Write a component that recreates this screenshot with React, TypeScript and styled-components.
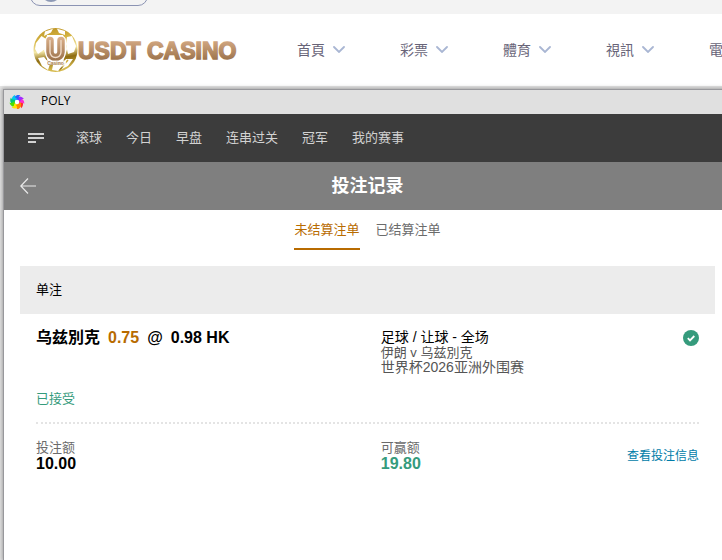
import React from 'react';
import styled, { createGlobalStyle } from 'styled-components';

const GlobalStyle = createGlobalStyle`
  * { box-sizing: border-box; }
  html, body, #root { height: 100%; }
  body {
    margin: 0;
    overflow: hidden;
    background: #e6e6e6;
    font-family: "Liberation Sans", "Noto Sans CJK SC", sans-serif;
    font-size: 13px;
    line-height: 15px;
    color: #000;
  }
  button { font: inherit; border: 0; padding: 0; background: none; cursor: pointer; }
  h1, h2, p, dl, dt, dd { margin: 0; }
`;

const Page = styled.div`
  display: flex;
  flex-direction: column;
  min-height: 100%;
  overflow: hidden;
`;

const TopStrip = styled.div`
  display: flex;
  align-items: flex-end;
  height: 14px;
  padding: 0 30px 8px;
  background: #f3f3f3;
`;

const AccountPill = styled.button`
  display: flex;
  align-items: center;
  flex: none;
  width: 118px;
  height: 28px;
  padding-left: 10px !important;
  border: 1px solid #8b93b3 !important;
  border-radius: 10px;
`;

const Avatar = styled.span`
  width: 20px;
  height: 20px;
  border-radius: 50%;
  background: #8d99b5;
`;

const SiteHeader = styled.header`
  display: flex;
  align-items: center;
  height: 72px;
  padding-left: 33px;
  background: #fff;
`;

const Brand = styled.a`
  display: flex;
  align-items: center;
  flex: none;
  width: 264px;
  text-decoration: none;
`;

const SiteMenu = styled.nav`
  display: flex;
  gap: 55px;
`;

const SiteMenuItem = styled.button`
  display: flex;
  align-items: center;
  gap: 8px;
  flex: none;
  height: 20px;
  margin-bottom: 2px;
  font-family: "Noto Sans CJK TC", sans-serif !important;
  font-size: 14px !important;
  line-height: 20px !important;
  color: #686478;
  white-space: nowrap;
`;

const Window = styled.main`
  flex: 1;
  display: flex;
  flex-direction: column;
  margin: 3px -10px 0 3px;
  border: 1px solid #98989c;
  border-bottom: 0;
  background: #fff;
  box-shadow: 0 0 4px 1px rgba(0, 0, 0, 0.3);
`;

const TitleBar = styled.div`
  display: flex;
  align-items: center;
  gap: 16px;
  height: 24px;
  padding: 0 5px 2px;
  background: #e0e0e0;
  font: 12px/16px "Open Sans", sans-serif;
`;

const SportsNav = styled.nav`
  display: flex;
  align-items: center;
  gap: 24px;
  height: 48px;
  padding-left: 24px;
  background: #3c3c3c;
  color: #d2d2d2;
`;

const MenuButton = styled.button`
  display: flex;
  width: 24px;
  color: inherit;
`;

const NavLink = styled.a`
  color: inherit;
  text-decoration: none;
  line-height: 20px;
  white-space: nowrap;
`;

const Heading = styled.div`
  display: grid;
  grid-template-columns: 48px 1fr 48px;
  align-items: center;
  height: 48px;
  background: #7f7f7f;
  color: #fff;
  h1 { font-size: 18px; line-height: 24px; text-align: center; }
`;

const BackButton = styled.button`
  display: flex;
  justify-content: center;
  color: #e9e9e9;
`;

const Tabs = styled.div`
  display: flex;
  justify-content: center;
  gap: 16px;
`;

const Tab = styled.button<{ $active?: boolean }>`
  height: 40px;
  border-bottom: 2px solid ${(p) => (p.$active ? '#b86b00' : 'transparent')} !important;
  color: ${(p) => (p.$active ? '#b86b00' : '#6b6b6b')};
`;

const Ticket = styled.article`
  margin: 16px;
`;

const TicketType = styled.h2`
  padding: 16px;
  background: #ececec;
  font-size: 13px;
  font-weight: 400;
  line-height: 16px;
`;

const TicketRow = styled.div`
  display: grid;
  grid-template-columns: 13fr 12fr;
  margin: 0 16px;
  padding: 16px 0;
  & + & { border-top: 2px dotted #e4e4e4; }
`;

const Split = styled.div`
  display: flex;
  justify-content: space-between;
  align-items: flex-start;
`;

const Selection = styled.div`
  display: flex;
  gap: 8px;
  font-size: 16px;
  font-weight: 700;
  line-height: 15px;
`;

const Handicap = styled.span`
  color: #b86b00;
`;

const Status = styled.p`
  margin-top: 46px;
  color: #359b7c;
`;

const Detail = styled.p<{ $size?: number; $strong?: boolean }>`
  font-size: ${(p) => p.$size ?? 13}px;
  line-height: 15px;
  color: ${(p) => (p.$strong ? '#000' : '#555')};
`;

const Amount = styled.dl<{ $win?: boolean }>`
  dt { color: #6b6b6b; }
  dd {
    font-size: 16px;
    font-weight: 700;
    line-height: 18px;
    color: ${(p) => (p.$win ? '#359b7c' : '#000')};
  }
`;

const InfoLink = styled.a`
  align-self: center;
  font-size: 12px;
  color: #007ca8;
  text-decoration: none;
`;

const BrandLogo = () => (
  <svg width="210" height="46" viewBox="0 0 210 46" role="img" aria-label="USDT Casino">
    <defs>
      <linearGradient id="gold" x1="0" y1="0" x2="0.15" y2="1">
        <stop offset="0" stopColor="#b98e1f" />
        <stop offset="0.3" stopColor="#d5b443" />
        <stop offset="0.55" stopColor="#f4e9aa" />
        <stop offset="0.75" stopColor="#8f6d12" />
        <stop offset="1" stopColor="#d6ba4e" />
      </linearGradient>
      <linearGradient id="bronze" gradientUnits="userSpaceOnUse" x1="0" y1="11" x2="0" y2="34">
        <stop offset="0" stopColor="#d9ae88" />
        <stop offset="1" stopColor="#9a714a" />
      </linearGradient>
    </defs>
    <circle cx="22.500" cy="23" r="22" fill="url(#gold)" />
    <g fill="#fff">
      <path d="M12 4.500 20 1.800 18 5.500 11 9z" />
      <path d="M24 1.800 32 4 32 8 26 6z" />
      <path d="M8.500 9 13 12 12 22 5 27 2 22 3 16z" />
      <path d="M34 10 39 9 43 19 41 25 35 27 33 17z" />
      <path d="M11 30 17 37 15 43 9 39 5 31z" />
      <path d="M20 38 28 38 33 32 40 32 35 39 25 44 19 43z" />
      <path d="M14 8 30 8 34 22 30 35 15 35 11 23z" />
    </g>
    <path d="M35 33 30 39 26 44" stroke="url(#gold)" strokeWidth="1.500" fill="none" />
    <g fill="none" strokeLinecap="round">
      <path d="M17 13.500V25a5.500 5.500 0 0 0 11 0V13.500" stroke="#fff" strokeWidth="10" />
      <path d="M17 13.500V25a5.500 5.500 0 0 0 11 0V13.500" stroke="url(#bronze)" strokeWidth="7.500" />
      <path d="M17 13.500V25a5.500 5.500 0 0 0 11 0V13.500" stroke="#f0dcc9" strokeWidth="1.400" />
    </g>
    <rect x="12" y="33.500" width="21" height="4.500" fill="#fff" opacity="0.8" />
    <text x="22.500" y="37.500" textAnchor="middle" fontFamily="Liberation Sans, sans-serif" fontWeight="700" fontSize="5" fill="#ad855e">Casino</text>
    <text
      x="45" y="32" fontFamily="Liberation Sans, sans-serif" fontWeight="700" fontSize="23"
      fill="url(#bronze)" stroke="url(#bronze)" strokeWidth="1.500"
    >
      USDT CASINO
    </text>
  </svg>
);

const Chevron = () => (
  <svg width="12" height="8" viewBox="0 0 12 8" aria-hidden="true">
    <path d="m1 2 5 5 5-5" fill="none" stroke="#a9b6d3" strokeWidth="1.800" strokeLinecap="round" />
  </svg>
);

const petals = ['#ff2b2b', '#ff2bd0', '#a12bff', '#2b62ff', '#00c8f0', '#00c878', '#4be000', '#ffe600', '#ff8a00'];

const Swirl = () => (
  <svg width="16" height="16" viewBox="0 0 16 16" aria-hidden="true">
    {petals.map((color, i) => (
      <path key={color} d="M5 6C5.500 2 9 0 12.500 2 10.500 2.500 10 4 10.500 6z" fill={color} transform={`translate(0 1) rotate(${110 - i * 40} 8 8)`} />
    ))}
    <circle cx="8" cy="9" r="2.200" fill="#fff" />
  </svg>
);

const siteMenu = ['首頁', '彩票', '體育', '視訊', '電子'];
const sportsNav = ['滚球', '今日', '早盘', '连串过关', '冠军', '我的赛事'];

export default function App() {
  return (
    <>
      <GlobalStyle />
      <Page>
        <TopStrip>
          <AccountPill aria-label="Account"><Avatar /></AccountPill>
        </TopStrip>
        <SiteHeader>
          <Brand href="#"><BrandLogo /></Brand>
          <SiteMenu>
            {siteMenu.map((label) => (
              <SiteMenuItem key={label}>{label}<Chevron /></SiteMenuItem>
            ))}
          </SiteMenu>
        </SiteHeader>

        <Window>
          <TitleBar><Swirl />POLY</TitleBar>
          <SportsNav>
            <MenuButton aria-label="菜单">
              <svg width="16" height="10" viewBox="0 0 16 10" aria-hidden="true">
                <path d="M0 1h16M0 5h16M0 9h8" stroke="currentColor" strokeWidth="2" />
              </svg>
            </MenuButton>
            {sportsNav.map((label) => <NavLink href="#" key={label}>{label}</NavLink>)}
          </SportsNav>
          <Heading>
            <BackButton aria-label="返回">
              <svg width="16" height="16" viewBox="0 0 16 16" aria-hidden="true">
                <path d="M8 .500.800 8 8 15.500M1 8h15" fill="none" stroke="currentColor" strokeWidth="1.200" />
              </svg>
            </BackButton>
            <h1>投注记录</h1>
          </Heading>
          <Tabs role="tablist">
            <Tab role="tab" aria-selected="true" $active>未结算注单</Tab>
            <Tab role="tab" aria-selected="false">已结算注单</Tab>
          </Tabs>

          <Ticket>
            <TicketType>单注</TicketType>
            <TicketRow>
              <div>
                <Selection>
                  <span>乌兹別克</span>
                  <Handicap>0.75</Handicap>
                  <span>@</span>
                  <span>0.98 HK</span>
                </Selection>
                <Status>已接受</Status>
              </div>
              <Split>
                <div>
                  <Detail $size={14} $strong>足球 / 让球 - 全场</Detail>
                  <Detail>伊朗 v 乌兹別克</Detail>
                  <Detail $size={14}>世界杯2026亚洲外围赛</Detail>
                </div>
                <svg width="16" height="16" viewBox="0 0 16 16" role="img" aria-label="已接受">
                  <circle cx="8" cy="8" r="8" fill="#359b7c" />
                  <path d="m4.800 8.200 2.200 2.200 4.300-4.400" fill="none" stroke="#fff" strokeWidth="1.800" />
                </svg>
              </Split>
            </TicketRow>
            <TicketRow>
              <Amount><dt>投注额</dt><dd>10.00</dd></Amount>
              <Split>
                <Amount $win><dt>可赢额</dt><dd>19.80</dd></Amount>
                <InfoLink href="#">查看投注信息</InfoLink>
              </Split>
            </TicketRow>
          </Ticket>
        </Window>
      </Page>
    </>
  );
}
